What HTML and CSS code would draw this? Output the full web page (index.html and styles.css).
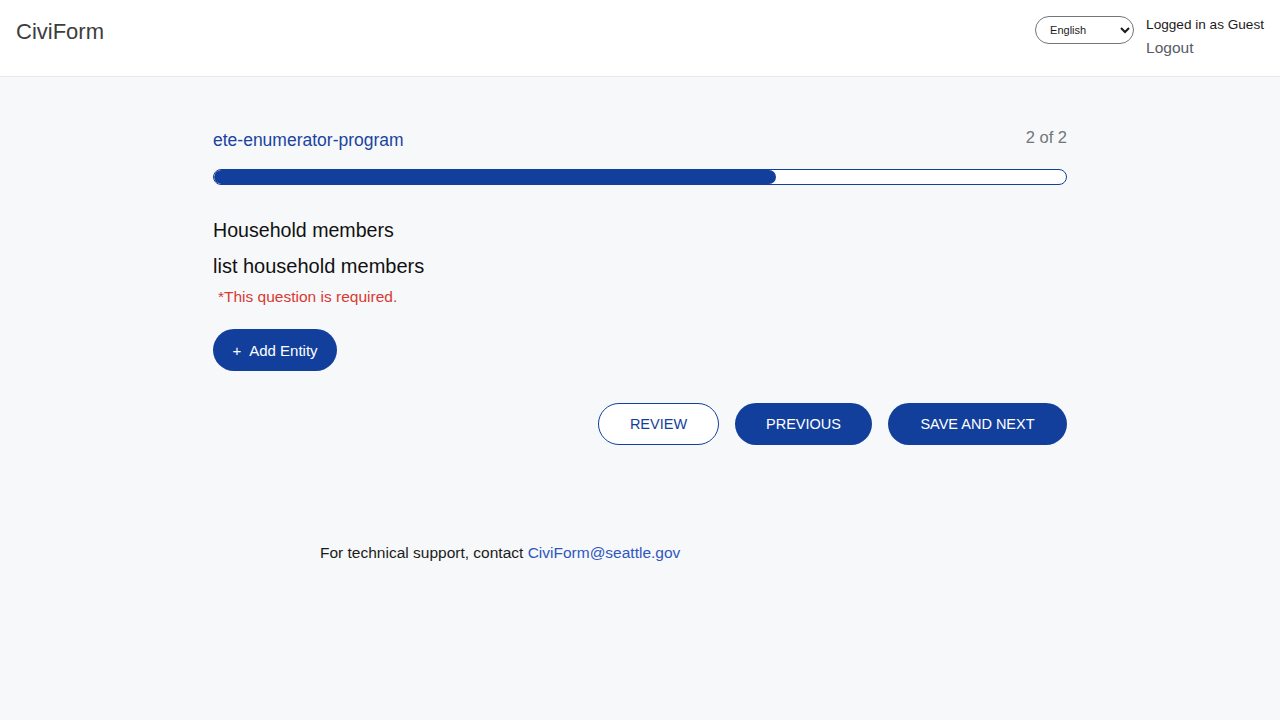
FILE: index.html
```html
<!DOCTYPE html>
<html lang="en">
<head>
<meta charset="utf-8">
<title>CiviForm</title>
<link rel="stylesheet" href="styles.css">
</head>
<body>
<header class="topbar">
  <div class="brand">CiviForm</div>
  <div class="account">
    <select class="lang">
      <option>English</option>
    </select>
    <div class="user">
      <div class="logged">Logged in as Guest</div>
      <a class="logout" href="#">Logout</a>
    </div>
  </div>
</header>
<main class="content">
  <div class="program-row">
    <div class="program-name">ete-enumerator-program</div>
    <div class="step">2 of 2</div>
  </div>
  <div class="progress"><div class="progress-fill" style="width:66%"></div></div>
  <h2 class="block-title">Household members</h2>
  <div class="question">list household members</div>
  <div class="error">*This question is required.</div>
  <button class="btn btn-solid add"><span class="plus">+</span>Add Entity</button>
  <div class="actions">
    <button class="btn btn-outline review">REVIEW</button>
    <button class="btn btn-solid prev">PREVIOUS</button>
    <button class="btn btn-solid next">SAVE AND NEXT</button>
  </div>
</main>
<footer class="support">For technical support, contact <a href="#">CiviForm@seattle.gov</a></footer>
</body>
</html>
```

FILE: styles.css
```css
html, body {
  margin: 0;
  padding: 0;
  background: #f7f8fa;
  font-family: "Liberation Sans", Arial, sans-serif;
  color: #1b1b1b;
}
.topbar {
  height: 77px;
  box-sizing: border-box;
  background: #fff;
  border-bottom: 1px solid #e6e8eb;
  display: flex;
  justify-content: space-between;
  align-items: flex-start;
  padding: 0 16px;
}
.brand {
  font-size: 22px;
  color: #3d3d3d;
  margin-top: 18px;
  line-height: 28px;
}
.account {
  display: flex;
  align-items: flex-start;
  margin-top: 16px;
  gap: 12px;
}
.lang {
  width: 99px;
  height: 28px;
  border: 1px solid #71767a;
  border-radius: 14px;
  background: #fff;
  font-family: "Liberation Sans", Arial, sans-serif;
  font-size: 11px;
  padding: 0 4px 0 10px;
  color: #1b1b1b;
}
.user {
  display: flex;
  flex-direction: column;
}
.logged {
  font-size: 13.6px;
  line-height: 18px;
  color: #1b1b1b;
}
.logout {
  font-size: 15.5px;
  line-height: 28px;
  color: #565c65;
  text-decoration: none;
}
.content {
  width: 854px;
  margin: 0 auto;
  padding-top: 50px;
  display: flex;
  flex-direction: column;
}
.program-row {
  display: flex;
  justify-content: space-between;
  align-items: flex-start;
}
.program-name {
  font-size: 17.5px;
  color: #1a44a0;
  margin-top: 2px;
  line-height: 22px;
}
.step {
  font-size: 16.5px;
  color: #71767a;
  line-height: 20px;
}
.progress {
  margin-top: 18px;
  height: 16px;
  box-sizing: border-box;
  border: 1px solid #133f9c;
  border-radius: 8px;
  background: #fff;
  overflow: hidden;
}
.progress-fill {
  height: 100%;
  background: #133f9c;
  border-radius: 8px;
}
.block-title {
  font-size: 19.6px;
  font-weight: normal;
  margin: 32px 0 0;
  line-height: 26px;
  color: #111;
}
.question {
  font-size: 20px;
  margin-top: 10px;
  line-height: 26px;
  color: #111;
}
.error {
  color: #d83933;
  font-size: 15.5px;
  margin: 7px 0 0 5px;
  line-height: 22px;
}
.btn {
  height: 42px;
  border-radius: 21px;
  font-family: "Liberation Sans", Arial, sans-serif;
  font-size: 14.5px;
  box-sizing: border-box;
  cursor: pointer;
}
.btn-solid {
  background: #133f9c;
  color: #fff;
  border: none;
}
.btn-outline {
  background: #fff;
  color: #133f9c;
  border: 1px solid #133f9c;
}
.add {
  align-self: flex-start;
  margin-top: 21px;
  width: 124px;
  padding: 0;
  font-size: 15px;
}
.plus {
  margin-right: 8px;
}
.actions {
  display: flex;
  justify-content: flex-end;
  gap: 16px;
  margin-top: 32px;
}
.review { width: 121px; }
.prev { width: 137px; }
.next { width: 179px; }
.support {
  margin-top: 99px;
  padding-left: 320px;
  font-size: 15.5px;
  color: #1b1b1b;
}
.support a {
  color: #2f56c0;
  text-decoration: none;
}
```
